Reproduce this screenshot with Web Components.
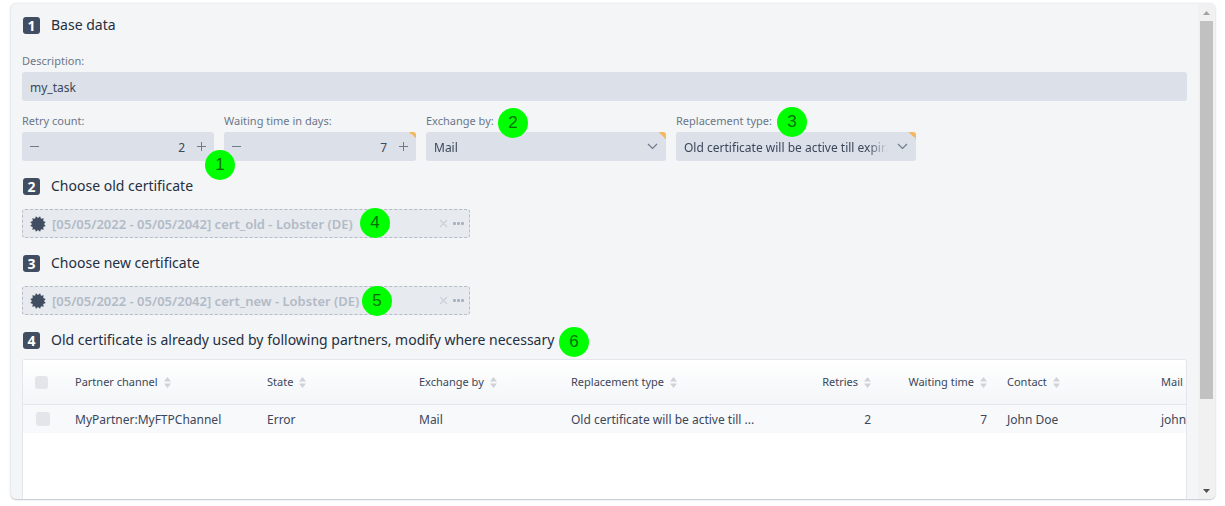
<!DOCTYPE html>
<html lang="en">
<head>
<meta charset="utf-8">
<title>Certificate exchange task</title>
<style>
	body {
		background: white;
		color: #3b475a;
		font: 12px/16px "Noto Sans", sans-serif;
		margin: 0;
	}
</style>
</head>
<body>

<task-panel>
	<section-title step="1">Base data</section-title>
	<text-field label="Description:" value="my_task"></text-field>
	<field-row>
		<number-field label="Retry count:" value="2"></number-field>
		<number-field label="Waiting time in days:" value="7" changed></number-field>
		<select-field label="Exchange by:" value="Mail" changed></select-field>
		<select-field label="Replacement type:" value="Old certificate will be active till expiration" changed></select-field>
	</field-row>
	<section-title step="2">Choose old certificate</section-title>
	<cert-picker>[05/05/2022 - 05/05/2042] cert_old - Lobster (DE)</cert-picker>
	<section-title step="3">Choose new certificate</section-title>
	<cert-picker>[05/05/2022 - 05/05/2042] cert_new - Lobster (DE)</cert-picker>
	<section-title step="4" tight>Old certificate is already used by following partners, modify where necessary</section-title>
	<partner-table></partner-table>

	<note-pin slot="notes" x="209" y="161">1</note-pin>
	<note-pin slot="notes" x="502" y="119">2</note-pin>
	<note-pin slot="notes" x="781" y="118">3</note-pin>
	<note-pin slot="notes" x="364" y="219">4</note-pin>
	<note-pin slot="notes" x="366" y="297">5</note-pin>
	<note-pin slot="notes" x="563" y="338">6</note-pin>
</task-panel>

<script>
class BaseElement extends HTMLElement {
	constructor() {
		super();
		this.attachShadow({mode:'open'});
	}

	connectedCallback() {
		this.shadowRoot.innerHTML = `
			<style>
				* { box-sizing: border-box; }
				:host { display: block; }
				button, input, select { color: inherit; font: inherit; margin: 0; }
				button { background: none; border: 0; cursor: pointer; padding: 0; }
				svg { display: block; }
			</style>
			${this.render()}
		`;
	}

	attr(name) {
		return this.getAttribute(name) || '';
	}
}

// shared look of the labelled form fields
const fieldStyle = `
	:host {
		--corner: transparent;
	}
	:host([changed]) {
		--corner: #f4b860;
	}
	label {
		color: #6b7789;
		display: block;
		font-size: 11px;
		line-height: 16px;
		margin-bottom: 3px;
		white-space: nowrap;
	}
	.box {
		background: linear-gradient(45deg, transparent 50%, var(--corner) 50%) top right / 7px 7px no-repeat #dce0e8;
		border-radius: 3px;
		height: 29px;
		overflow: hidden;
	}
	input, select {
		background: none;
		border: 0;
		height: 29px;
		outline: none;
		width: 100%;
	}
`;

class TaskPanel extends BaseElement {
	render() {
		return `
			<style>
				:host {
					background: #f3f5f7;
					border-radius: 5px;
					box-shadow: 0 0 3px #c9ced6, 0 1px 1px #c9ced6;
					display: grid;
					grid-template-columns: minmax(0, 1fr) 17px;
					height: calc(100vh - 11px);
					margin: 4px 10px 7px 11px;
					overflow: hidden;
				}
				main {
					display: flex;
					flex-direction: column;
					min-height: 0;
					overflow: hidden;
					padding: 11px 11px 0;
					position: relative;
				}
			</style>
			<main>
				<slot></slot>
				<slot name="notes"></slot>
			</main>
			<scroll-rail></scroll-rail>
		`;
	}
}

class ScrollRail extends BaseElement {
	render() {
		return `
			<style>
				:host {
					background: #f1f1f1;
					display: flex;
					flex-direction: column;
				}
				button {
					display: grid;
					height: 17px;
					place-items: center;
				}
				.track {
					flex: 1;
					padding: 0 2px;
				}
				.thumb {
					background: #c1c1c1;
					height: 82%;
				}
			</style>
			<button aria-label="Scroll up"><svg width="7" height="4"><path d="M0 4 3.5 0 7 4z" fill="#a3a3a3"/></svg></button>
			<div class="track"><div class="thumb"></div></div>
			<button aria-label="Scroll down"><svg width="7" height="4"><path d="M0 0h7L3.5 4z" fill="#505050"/></svg></button>
		`;
	}
}

class SectionTitle extends BaseElement {
	render() {
		return `
			<style>
				:host {
					padding-bottom: 13px;
				}
				:host([step="1"]) {
					padding-bottom: 18px;
				}
				:host([tight]) {
					padding-bottom: 9px;
				}
				h2 {
					align-items: center;
					color: #252f3f;
					display: flex;
					font-size: 14px;
					font-weight: 400;
					gap: 11px;
					line-height: 20px;
					margin: 0;
				}
				.step {
					background: #414d60;
					border-radius: 3px;
					color: white;
					font-size: 14px;
					font-weight: 700;
					height: 17px;
					line-height: 17px;
					margin-left: 1px;
					text-align: center;
					width: 17px;
				}
			</style>
			<h2><span class="step">${this.attr('step')}</span><slot></slot></h2>
		`;
	}
}

class FieldRow extends BaseElement {
	render() {
		return `
			<style>
				:host {
					display: flex;
					gap: 10px;
					padding: 12px 0 15px;
				}
			</style>
			<slot></slot>
		`;
	}
}

class TextField extends BaseElement {
	render() {
		return `
			<style>
				${fieldStyle}
				input {
					padding: 2px 8px 0;
				}
			</style>
			<label for="field">${this.attr('label')}</label>
			<div class="box"><input id="field" type="text" value="${this.attr('value')}"></div>
		`;
	}
}

class NumberField extends BaseElement {
	render() {
		return `
			<style>
				${fieldStyle}
				:host {
					width: 192px;
				}
				.box {
					display: flex;
				}
				input {
					flex: 1;
					min-width: 0;
					padding: 2px 4px 0;
					text-align: right;
				}
				button {
					display: grid;
					flex: none;
					place-items: center;
					width: 25px;
				}
				path {
					fill: none;
					stroke: #707b8b;
				}
			</style>
			<label for="field">${this.attr('label')}</label>
			<div class="box">
				<button aria-label="Less"><svg width="9" height="9"><path d="M0 4.5h9"/></svg></button>
				<input id="field" type="text" inputmode="numeric" value="${this.attr('value')}">
				<button aria-label="More"><svg width="9" height="9"><path d="M0 4.5h9M4.5 0v9"/></svg></button>
			</div>
		`;
	}
}

class SelectField extends BaseElement {
	render() {
		return `
			<style>
				${fieldStyle}
				:host {
					width: 240px;
				}
				.box {
					align-items: center;
					display: grid;
				}
				select, svg {
					grid-area: 1 / 1;
				}
				select {
					appearance: none;
					-webkit-mask-image: linear-gradient(to left, transparent 28px, black 48px);
					mask-image: linear-gradient(to left, transparent 28px, black 48px);
					padding: 2px 28px 0 8px;
				}
				svg {
					justify-self: end;
					margin-right: 8px;
					pointer-events: none;
				}
			</style>
			<label for="field">${this.attr('label')}</label>
			<div class="box">
				<select id="field"><option>${this.attr('value')}</option></select>
				<svg width="11" height="7"><path d="M1 1l4.5 4.5L10 1" fill="none" stroke="#707b8b" stroke-width="1.2"/></svg>
			</div>
		`;
	}
}

class CertPicker extends BaseElement {
	// round seal with a toothed edge
	seal() {
		const teeth = 12;
		const points = [];
		for (let i = 0; i < teeth * 2; i++) {
			const r = i % 2 ? 6 : 8;
			const a = Math.PI * (i + 1) / teeth;
			points.push(`${(8 + r * Math.sin(a)).toFixed(2)},${(8 - r * Math.cos(a)).toFixed(2)}`);
		}
		return `<svg width="16" height="16"><polygon points="${points.join(' ')}" fill="#414d60"/></svg>`;
	}

	render() {
		return `
			<style>
				:host {
					margin-bottom: 15px;
				}
				.box {
					align-items: center;
					background: #e7eaee;
					border: 1px dashed #b4bcc8;
					border-radius: 3px;
					color: #b2bac7;
					display: flex;
					gap: 6px;
					height: 29px;
					padding: 0 4px 0 7px;
					width: 448px;
				}
				.name {
					flex: 1;
					font-size: 13px;
					font-weight: 600;
					white-space: nowrap;
				}
				.tools {
					display: flex;
					gap: 5px;
				}
				button {
					display: grid;
					height: 16px;
					place-items: center;
				}
			</style>
			<div class="box">
				${this.seal()}
				<span class="name"><slot></slot></span>
				<span class="tools">
					<button aria-label="Clear"><svg width="9" height="9"><path d="M1 1l7 7M8 1l-7 7" stroke="#ccd1d9" stroke-width="1.2"/></svg></button>
					<button aria-label="Choose"><svg width="12" height="3" fill="#a9b2bf"><rect width="3" height="3" rx="1"/><rect x="4" width="3" height="3" rx="1"/><rect x="8" width="3" height="3" rx="1"/></svg></button>
				</span>
			</div>
		`;
	}
}

class PartnerTable extends BaseElement {
	static columns = [
		['Partner channel', 192],
		['State', 152],
		['Exchange by', 152],
		['Replacement type', 200],
		['Retries', 120, 'num'],
		['Waiting time', 116, 'num'],
		['Contact', 154],
		['Mail', 152],
	];

	static rows = [
		['MyPartner:MyFTPChannel', 'Error', 'Mail', 'Old certificate will be active till ...', '2', '7', 'John Doe', 'john'],
	];

	render() {
		const {columns, rows} = PartnerTable;
		const sort = '<svg width="7" height="11" fill="#cfd2d7"><path d="M0 4.5 3.5 0 7 4.5zM0 6.5h7L3.5 11z"/></svg>';
		return `
			<style>
				:host {
					background: white;
					border: 1px solid #e3e6ea;
					border-bottom: 0;
					border-radius: 3px 3px 0 0;
					flex: 1;
					min-height: 0;
					overflow: hidden;
				}
				table {
					border-collapse: separate;
					border-spacing: 0;
					table-layout: fixed;
					width: 1282px;
				}
				th, td {
					font-weight: 400;
					padding: 0 12px 0 8px;
					text-align: left;
					white-space: nowrap;
				}
				th {
					border-bottom: 1px solid #e3e6ec;
					font-size: 11px;
					height: 45px;
				}
				thead {
					background: linear-gradient(white, #f3f5f7);
				}
				td {
					height: 28px;
					padding-top: 2px;
				}
				tbody tr {
					background: #f8f9fb;
				}
				th div {
					align-items: center;
					display: flex;
					gap: 6px;
				}
				.num {
					text-align: right;
				}
				.num div {
					justify-content: flex-end;
				}
				.check {
					padding: 0 12px;
				}
				input {
					appearance: none;
					background: #e2e5ea;
					border-radius: 3px;
					display: block;
					height: 13px;
					width: 13px;
				}
				td input {
					height: 14px;
					width: 14px;
				}
				td.check {
					padding-left: 13px;
				}
			</style>
			<table>
				<colgroup><col style="width:44px">${columns.map(([, width]) => `<col style="width:${width}px">`).join('')}</colgroup>
				<thead>
					<tr>
						<th class="check"><input type="checkbox" aria-label="Select all"></th>
						${columns.map(([name, , cls = '']) => `<th class="${cls}"><div>${name}${sort}</div></th>`).join('')}
					</tr>
				</thead>
				<tbody>
					${rows.map(row => `
						<tr>
							<td class="check"><input type="checkbox" aria-label="Select ${row[0]}"></td>
							${row.map((text, i) => `<td class="${columns[i][2] || ''}">${text}</td>`).join('')}
						</tr>
					`).join('')}
				</tbody>
			</table>
		`;
	}
}

/**
 * Numbered marker, x and y give its centre on the panel
 */
class NotePin extends BaseElement {
	render() {
		return `
			<style>
				:host {
					background: #0f0;
					border-radius: 50%;
					color: #067006;
					font: 17px/30px "Liberation Sans", sans-serif;
					height: 30px;
					left: ${this.attr('x')}px;
					position: absolute;
					text-align: center;
					top: ${this.attr('y')}px;
					translate: -50% -50%;
					width: 30px;
				}
			</style>
			<slot></slot>
		`;
	}
}

customElements.define('task-panel', TaskPanel);
customElements.define('scroll-rail', ScrollRail);
customElements.define('section-title', SectionTitle);
customElements.define('field-row', FieldRow);
customElements.define('text-field', TextField);
customElements.define('number-field', NumberField);
customElements.define('select-field', SelectField);
customElements.define('cert-picker', CertPicker);
customElements.define('partner-table', PartnerTable);
customElements.define('note-pin', NotePin);
</script>
</body>
</html>
